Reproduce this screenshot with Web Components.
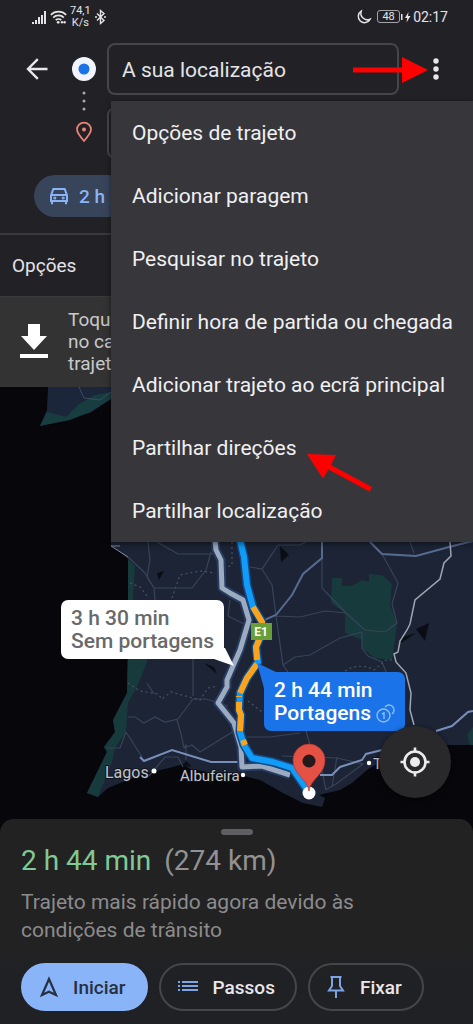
<!DOCTYPE html>
<html lang="pt">
<head>
<meta charset="utf-8">
<meta name="viewport" content="width=device-width, initial-scale=1">
<title>Trajeto</title>
<style>
    body {
        margin: 0;
        background: #07070b;
        color: #e4e4e6;
        font-family: Roboto, "Noto Sans", sans-serif;
    }
</style>
</head>
<body>
<directions-app></directions-app>

<script>
function define(name, html) {
    customElements.define(name, class extends HTMLElement {
        constructor() {
            super();
            this.attachShadow({ mode: 'open' }).innerHTML = html;
        }
    });
}

define('status-bar', `
    <style>
        :host {
            display: flex;
            justify-content: space-between;
            align-items: center;
            height: 33px;
            padding: 0 25px 0 32px;
        }
        div { display: flex; align-items: center; }
        .left { gap: 3px; }
        .right { gap: 2px; font-size: 14px; }
        .speed { display: block; font-size: 11px; line-height: 12px; text-align: center; }
        .battery {
            box-sizing: border-box;
            width: 23px;
            height: 13px;
            justify-content: center;
            border: 1px solid #a5a5a8;
            border-radius: 3px;
            font-size: 11px;
            line-height: 11px;
            margin-left: 4px;
        }
        svg { display: block; overflow: visible; fill: #e4e4e6; }
    </style>
    <div class="left">
        <svg width="15" height="14" viewBox="0 0 15 14">
            <path d="M0 12h2v2H0zM3 10h2v4H3zM6 7h2v7H6zM9 5h2v9H9zM12 1h2v13h-2z"/>
        </svg>
        <svg width="17" height="14" viewBox="0 0 17 14">
            <g fill="none" stroke="#e4e4e6" stroke-width="1.7">
                <path d="M.8 4.8a11 11 0 0 1 15.4 0M3.2 7.6a7.6 7.6 0 0 1 10.6 0M5.7 10.2a4 4 0 0 1 5.6 0"/>
            </g>
            <circle cx="8.2" cy="12.3" r="1.4"/>
            <circle cx="12" cy="12.3" r="1.2"/><circle cx="14.6" cy="12.3" r="1.2"/>
        </svg>
        <div class="speed">74,1<br>K/s</div>
        <svg width="13" height="16" viewBox="0 0 13 16">
            <path fill="none" stroke="#e4e4e6" stroke-width="1.4" d="M3 4.5l7 7-3.5 3V1.5L10 4.5l-7 7"/>
            <circle cx="2" cy="8" r="1"/><circle cx="11" cy="8" r="1"/>
        </svg>
    </div>
    <div class="right">
        <svg width="14" height="14" viewBox="0 0 14 14">
            <path fill="none" stroke="#e4e4e6" stroke-width="1.5" d="M4.2 1.2A6.2 6.2 0 1 0 13 9.3 6.6 6.6 0 0 1 4.2 1.2z"/>
        </svg>
        <div class="battery">48</div>
        <svg width="9" height="12" viewBox="0 0 9 12">
            <path d="M-1 3H.500v6H-1zM6.500 1L3 7h2.200L4.500 11.500 8.500 5H6z"/>
        </svg>
        <div>02:17</div>
    </div>
`);

define('route-fields', `
    <style>
        :host {
            display: grid;
            grid-template-columns: 48px 46px 1fr 74px;
            grid-template-rows: 52px 52px;
            row-gap: 12px;
            padding: 10px 0 16px 13px;
        }
        button {
            display: flex;
            align-items: center;
            justify-content: center;
            padding: 0;
            border: 0;
            background: none;
        }
        .markers {
            grid-row: 1 / 3;
            grid-column: 2;
            display: flex;
            flex-direction: column;
            align-items: center;
            gap: 10px;
            padding-top: 14px;
        }
        input {
            box-sizing: border-box;
            width: 100%;
            min-width: 0;
            height: 52px;
            padding: 2px 13px 0;
            border: 2px solid #46464a;
            border-radius: 8px;
            background: transparent;
            color: #e4e4e6;
            font: 21px Roboto, "Noto Sans", sans-serif;
        }
        .to { grid-column: 3; grid-row: 2; }
        svg { display: block; }
    </style>
    <button aria-label="Voltar">
        <svg width="24" height="24" viewBox="0 0 24 24" fill="none" stroke="#e8e8ea" stroke-width="2.400">
            <path d="M22.500 12H3.500M12.800 2.200L3 12l9.800 9.800"/>
        </svg>
    </button>
    <div class="markers">
        <svg width="24" height="24" viewBox="0 0 24 24">
            <circle cx="12" cy="12" r="12" fill="#f1f4fb"/><circle cx="12" cy="12" r="5.500" fill="#1a73e8"/>
        </svg>
        <svg width="4" height="20" viewBox="0 0 4 20" fill="#aaaaad">
            <circle cx="2" cy="2" r="1.500"/><circle cx="2" cy="10" r="1.500"/><circle cx="2" cy="18" r="1.500"/>
        </svg>
        <svg width="18" height="22" viewBox="0 0 18 22">
            <path fill="none" stroke="#e8837a" stroke-width="1.800" d="M9 20C5 15.500 2 12 2 8.600a7 7 0 0 1 14 0C16 12 13 15.500 9 20z"/>
            <circle cx="9" cy="8.500" r="2" fill="#e8837a"/>
        </svg>
    </div>
    <input aria-label="Ponto de partida" value="A sua localização">
    <button aria-label="Mais opções">
        <svg width="8" height="24" viewBox="0 0 8 24" fill="#e8e8ea">
            <circle cx="4" cy="4" r="2.700"/><circle cx="4" cy="12" r="2.700"/><circle cx="4" cy="20" r="2.700"/>
        </svg>
    </button>
    <input class="to" aria-label="Destino">
`);

define('travel-modes', `
    <style>
        :host { display: block; padding: 0 34px 16px; border-bottom: 2px solid #3a3a3e; }
        button {
            display: flex;
            align-items: center;
            gap: 10px;
            height: 42px;
            padding: 0 24px 0 15px;
            border: 0;
            border-radius: 21px;
            background: #38445a;
            color: #8ab4f8;
            font: 500 19px Roboto, "Noto Sans", sans-serif;
        }
    </style>
    <button>
        <svg width="20" height="18" viewBox="0 0 20 18" fill="none" stroke="#8ab4f8" stroke-width="2">
            <path d="M2 8.500L4.300 2h11.400L18 8.500V14H2zM2 8h16M3 14v3.200M17 14v3.200"/>
            <circle cx="5.800" cy="11" r=".6"/><circle cx="14.200" cy="11" r=".6"/>
        </svg>
        <span>2 h</span>
    </button>
`);

define('save-banner', `
    <style>
        :host {
            display: flex;
            align-items: center;
            gap: 20px;
            padding: 12px 20px;
            background: #333333;
            color: #c9c9cb;
            font-size: 19px;
            line-height: 22px;
        }
    </style>
    <svg width="28" height="36" viewBox="0 0 28 36" fill="#fff">
        <path d="M8 0h12v12h7L14 26 1 12h7zM0 30h28v4H0z"/>
    </svg>
    <div>Toque<br>no ca<br>trajeto</div>
`);

define('overflow-menu', `
    <style>
        :host {
            display: block;
            background: #37373b;
            box-shadow: 0 2px 6px rgba(0, 0, 0, .5);
        }
        ul { margin: 0; padding: 0; list-style: none; }
        button {
            width: 100%;
            height: 63px;
            padding: 0 21px;
            border: 0;
            background: none;
            color: #f0f0f2;
            font: 21px Roboto, "Noto Sans", sans-serif;
            text-align: left;
            white-space: nowrap;
        }
    </style>
    <ul>
        <li><button>Opções de trajeto</button></li>
        <li><button>Adicionar paragem</button></li>
        <li><button>Pesquisar no trajeto</button></li>
        <li><button>Definir hora de partida ou chegada</button></li>
        <li><button>Adicionar trajeto ao ecrã principal</button></li>
        <li><button>Partilhar direções</button></li>
        <li><button>Partilhar localização</button></li>
    </ul>
`);

define('route-callout', `
    <style>
        :host {
            display: block;
            padding: 7px 10px 6px;
            border-radius: 7px;
            background: var(--callout-bg, #fff);
            color: var(--callout-color, #68696b);
            font-size: 21px;
            font-weight: 500;
            line-height: 23px;
            white-space: nowrap;
        }
    </style>
    <slot></slot>
`);

define('route-map', `
    <style>
        :host { display: block; position: relative; overflow: hidden; min-height: 432px; }
        .land { position: absolute; inset: 0; width: 100%; height: 100%; }
        text { font-family: Roboto, "Noto Sans", sans-serif; fill: #c4c5c9; }
        route-callout { position: absolute; }
        .free { left: 61px; top: 213px; }
        .toll {
            left: 264px;
            top: 285px;
            --callout-bg: #1a73e8;
            --callout-color: #fff;
        }
        .toll svg { vertical-align: -3px; }
        .locate {
            position: absolute;
            right: 22px;
            bottom: 21px;
            width: 72px;
            height: 72px;
            display: flex;
            align-items: center;
            justify-content: center;
            border: 0;
            border-radius: 50%;
            background: #29292c;
            box-shadow: 0 1px 4px rgba(0, 0, 0, .6);
        }
    </style>
    <svg class="land" viewBox="0 387 473 432" preserveAspectRatio="xMidYMid slice">
        <rect y="380" width="473" height="445" fill="#07070b"/>

        <!-- Lisbon peninsula -->
        <path fill="#1c263a" d="M48 387L47 410 40 426 67 418 90 413 111 399V380H48z"/>
        <path fill="#173d40" d="M40 426L47 412 66 417 78 405 95 395 111 392V399L90 412 70 420z"/>
        <path fill="none" stroke="#3c4c60" d="M79 387L84 398 100 400 111 392"/>

        <!-- Mainland -->
        <path fill="#1c2435" d="M112 530L111 545 128 559 129 600 128 660 127 693 113 720 115 732 104 747 107 752 87 793 98 797 108 788 140 775 173 767 183 764 190 769 207 772 240 775 260 780 283 793 303 803 322 807 325 798 319 795 340 790 352 783 367 770 388 757 427 745H473V530z"/>
        <path fill="#173a3d" d="M128 559L135 566 133 600 148 655 147 662 137 687 128 703 126 732 115 748 112 762 98 797 87 793 107 752 104 747 115 732 113 720 127 693 128 640z"/>
        <path fill="#173a3d" d="M332 578H342V586H352L362 580 369 582V574L382 575 392 584 390 605 397 624 395 640 392 660 375 658 362 648V640L345 633V613L331 603z"/>
        <path fill="#173a3d" d="M473 727L467 735 470 745H473z"/>

        <g fill="#0b0d14">
            <path d="M157 573L164 571 159 580zM280 546L289 555 281 562zM416 629L429 623 425 641zM400 638L416 633 401 643zM204 663L214 667 217 674zM183 765L186 761 192 767z"/>
        </g>

        <!-- Minor roads -->
        <g fill="none" stroke="#38445a" stroke-width="1.200">
            <path d="M148 542L150 560 147 577 154 588 155 600M128 557L145 573 154 588H192L206 570 211 552M157 542L178 554H216"/>
            <path d="M147 683L154 694M128 717H135L144 723 155 717 165 722 178 719 193 699H206L228 706M193 659V696M177 720L181 734 184 748 192 745 200 752 234 731M126 732L142 757M184 748L186 745V760"/>
            <path d="M149 776L165 757H178L183 767M107 748H120L126 732M230 600L228 616 248 626M193 659L196 655"/>
            <path d="M250 567L262 569 278 545H300L306 542M262 569L272 585 276 616 283 665 290 675 310 745M276 616L300 617 325 611 346 613M283 665L295 657 310 655 340 638 362 632"/>
            <path d="M322 542V588L346 613 365 630 385 632 397 623 392 604 398 583 382 554M362 632V648L368 656 382 662 387 674M410 542L414 553"/>
            <path d="M247 737H270L300 733M310 745L319 757 326 790M337 757L332 787M282 756L337 758 363 764 336 784 325 790"/>
        </g>
        <g fill="none" stroke="#48536a" stroke-width="1.200" stroke-dasharray="2 3">
            <path d="M130 583L140 587 147 596M172 598L180 575 200 571 215 573M232 542V565L217 572M128 683L140 691 158 694 162 699 171 692 200 700 208 688 218 686M248 701L262 712M345 671Q360 662 374 670L386 660H393"/>
        </g>
        <!-- Main roads -->
        <g fill="none" stroke="#566b91" stroke-width="2">
            <path d="M322 542V558L303 574 292 595 276 615 262 621M370 542L382 554 416 556 449 547 473 541"/>
            <path stroke="#788fba" d="M140 757L144 761 172 750 211 762H240M320 775H332L340 767 362 760 366 754 382 750M436 731L452 726 468 712 473 711"/>
        </g>
        <path fill="none" stroke="#9da5b1" stroke-width="1.500" d="M450 542L451 556 444 563 440 579 415 600 410 624 407 630 400 641 398 652 394 654 396 662 406 673 411 693 410 710 414 725"/>
        <path fill="none" stroke="#7e8ba3" d="M128 557L111 546H120"/>

        <!-- Routes -->
        <g fill="none" stroke-linejoin="round">
            <path stroke="#263c60" stroke-width="9" d="M215 540L216 550 221 560 222 588 230 593 243 600 249 620 240 650 227 680 227 687 218 703 234 723 241 747 242 767 262 766 290 775"/>
            <path stroke="#9cabc0" stroke-width="5" d="M215 540L216 550 221 560 222 588 230 593 243 600 249 620 240 650 227 680 227 687 218 703 234 723 241 747 242 767 262 766 290 775"/>
            <path stroke="#154a88" stroke-width="9" d="M240 540L244 557 247 585 253 607 262 622 262 633 256 647 258 662 247 678 240 693 239 710 241 715 240 732 244 745 252 758 273 762 292 768 308 791"/>
            <path stroke="#109cf7" stroke-width="6" d="M240 540L244 557 247 585 253 607 262 622 262 633 256 647 258 662 247 678 240 693 239 710 241 715 240 732 244 745 252 758 273 762 292 768 308 791"/>
            <path stroke="#faa31b" stroke-width="6" d="M253 607L262 622 262 633 256 647 257 660M257 664L247 678 240 693M239 696V697M239 702V710L241 715 240 731M243 740L245 745"/>
        </g>

        <path fill="#689f38" d="M251 623h21v17h-21z"/>
        <text x="261" y="636" font-size="12" font-weight="700" text-anchor="middle" style="fill: #fff">E1</text>

        <!-- Callout tails -->
        <path fill="#fff" d="M225 648L234 666 214 659V648z"/>
        <path fill="#1a73e8" d="M257 663L276 672V692H265z"/>

        <g fill="#fff"><circle cx="154" cy="771" r="2.500"/><circle cx="243" cy="775" r="2.200"/><circle cx="369" cy="763" r="2.200"/></g>
        <g stroke="#10131c" stroke-width="2" paint-order="stroke">
            <text x="105" y="778" font-size="16">Lagos</text>
            <text x="180" y="781" font-size="15">Albufeira</text>
            <text x="373" y="769" font-size="15">Tavira</text>
        </g>

        <!-- Destination pin -->
        <circle cx="309" cy="793" r="6.500" fill="#fff"/>
        <path fill="#e65145" stroke="#a93931" stroke-width=".7" d="M309 791C307 778 293 775 293 760a16 16 0 0 1 32 0C325 775 311 778 309 791z"/>
        <circle cx="309" cy="761" r="6.500" fill="#26191b"/>
    </svg>
    <route-callout class="free">3 h 30 min<br>Sem portagens</route-callout>
    <route-callout class="toll">2 h 44 min<br>Portagens
        <svg width="19" height="19" viewBox="0 0 19 19" fill="none" stroke="#8dbdf7" stroke-width="1.400">
            <circle cx="7.500" cy="11.500" r="6.500"/>
            <path d="M9 3a5 5 0 1 1 7 7M6 10l2-1v6"/>
        </svg>
    </route-callout>
    <button class="locate" aria-label="A minha localização">
        <svg width="30" height="30" viewBox="0 0 30 30" fill="none" stroke="#ececee" stroke-width="2.600">
            <circle cx="15" cy="15" r="10.500"/>
            <circle cx="15" cy="15" r="5" fill="#ececee" stroke="none"/>
            <path d="M15 .5v5M15 24.500v5M.5 15h5M24.500 15h5"/>
        </svg>
    </button>
`);

define('pill-button', `
    <style>
        :host { display: block; }
        button {
            box-sizing: border-box;
            display: flex;
            align-items: center;
            gap: 14px;
            height: 48px;
            padding: 0 20px 0 16px;
            border: 2px solid var(--pill-border, #46464a);
            border-radius: 24px;
            background: var(--pill-bg, transparent);
            color: var(--pill-color, #e8e8ea);
            font: 500 19px Roboto, "Noto Sans", sans-serif;
        }
    </style>
    <button><slot name="icon"></slot><slot></slot></button>
`);

define('trip-sheet', `
    <style>
        :host {
            display: block;
            padding: 10px 21px 13px;
            border-radius: 14px 14px 0 0;
            background: linear-gradient(#222222 60%, #202125 75%);
        }
        .handle { width: 32px; height: 6px; margin: 0 auto 10px; border-radius: 3px; background: #5e5e63; }
        h1 { margin: 0 0 11px; font-size: 28px; font-weight: 400; line-height: 32px; color: #81c995; }
        h1 span { margin-left: 6px; color: #929294; }
        p { max-width: 360px; margin: 0 0 19px; font-size: 21px; line-height: 28px; color: #8c8c8e; }
        .actions { display: flex; gap: 11px; }
        .start { --pill-bg: #8ab4f8; --pill-border: #8ab4f8; --pill-color: #263042; }
        svg { display: block; }
    </style>
    <div class="handle"></div>
    <h1>2 h 44 min <span>(274 km)</span></h1>
    <p>Trajeto mais rápido agora devido às condições de trânsito</p>
    <div class="actions">
        <pill-button class="start">
            <svg slot="icon" width="20" height="22" viewBox="0 0 20 22" fill="none" stroke="#263042" stroke-width="2.200">
                <path d="M10 3L3 19l7-3.300L17 19z"/>
            </svg>
            Iniciar
        </pill-button>
        <pill-button>
            <svg slot="icon" width="22" height="16" viewBox="0 0 22 16" fill="#7ba5e6">
                <path d="M5 2h16v2H5zM5 6h16v2H5zM5 10h16v2H5zM1 2h2v2H1zM1 6h2v2H1zM1 10h2v2H1z"/>
            </svg>
            Passos
        </pill-button>
        <pill-button>
            <svg slot="icon" width="20" height="24" viewBox="0 0 20 24" fill="none" stroke="#7ba5e6" stroke-width="2">
                <path d="M4.500 2h11M6 2v9l-3 4.500h14L14 11V2M10 15.500V23"/>
            </svg>
            Fixar
        </pill-button>
    </div>
`);

define('directions-app', `
    <style>
        :host { display: flex; flex-direction: column; min-height: 100vh; position: relative; }
        header { background: #222226; }
        .options {
            box-sizing: border-box;
            height: 62px;
            padding: 0 12px;
            display: flex;
            align-items: center;
            border-bottom: 1px solid #3a3a3c;
            font-size: 19px;
        }
        route-map { flex: 1; }
        overflow-menu { position: absolute; top: 101px; right: 0; left: 111px; }
        .arrows { position: absolute; top: 0; right: 0; pointer-events: none; }
    </style>
    <header>
        <status-bar></status-bar>
        <route-fields></route-fields>
        <travel-modes></travel-modes>
        <div class="options">Opções</div>
    </header>
    <save-banner></save-banner>
    <route-map></route-map>
    <trip-sheet></trip-sheet>
    <overflow-menu></overflow-menu>
    <svg class="arrows" width="173" height="500" viewBox="300 0 173 500" fill="#fe0000">
        <path d="M353 67.500h49V57l26 13-26 13V72.500h-49z"/>
        <path d="M307 454l29 1-5 10 41 22-2.500 4.500-41-22-5.500 9z"/>
    </svg>
`);
</script>
</body>
</html>
